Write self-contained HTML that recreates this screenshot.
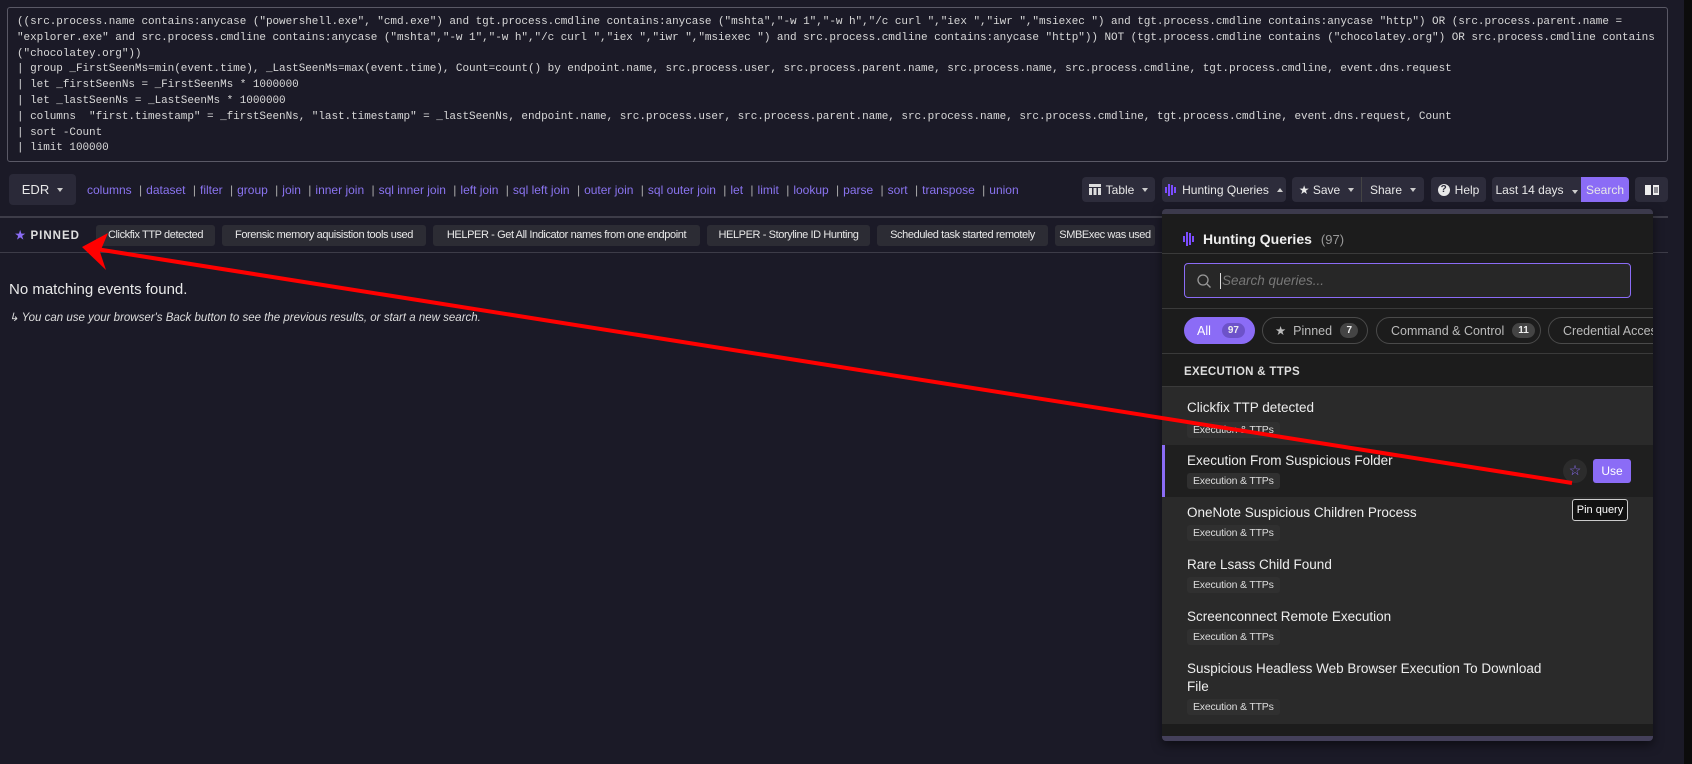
<!DOCTYPE html>
<html><head><meta charset="utf-8"><style>
*{box-sizing:border-box;margin:0;padding:0}
body{width:1692px;height:764px;background:#1b1a27;font-family:"Liberation Sans",sans-serif;color:#ddd;position:relative;overflow:hidden}
.abs{position:absolute}
.code{left:7px;top:7px;width:1661px;height:155px;border:1px solid #5a5966;border-radius:3px;font-family:"Liberation Mono",monospace;font-size:11px;letter-spacing:-0.05px;line-height:15.8px;color:#d8d8d8;padding:7px 9px;white-space:pre;overflow:hidden}
.btn{background:#2d2c3b;border-radius:4px;color:#e8e8e8;font-size:12px;display:flex;align-items:center;justify-content:center;height:25px;top:177px}
.car{display:inline-block;width:0;height:0;border-left:3.5px solid transparent;border-right:3.5px solid transparent;border-top:4px solid #ccc;margin-left:8px}
.caru{border-top:none;border-bottom:4px solid #ccc}
.links{left:87px;top:183px;font-size:12px;color:#8a74f0;white-space:nowrap}
.links i{font-style:normal;color:#aaa;margin:0 4px}
.hr{height:2px;background:#3d3c48}
.chip{top:225px;height:21px;background:#2c2c34;border-radius:3px;font-size:11px;color:#e8e8e8;line-height:21px;text-align:center;white-space:nowrap;letter-spacing:-0.4px;overflow:hidden}
.panel{left:1162px;top:209px;width:491px;height:532px;background:#1c1c1c;border-radius:4px;overflow:hidden;box-shadow:0 4px 10px rgba(0,0,0,.5)}
.item{position:absolute;left:0;width:491px;background:#2a2a2a}
.item .t{position:absolute;left:25px;font-size:13.5px;color:#eee;line-height:18px}
.item .g{position:absolute;left:25px;font-size:10.5px;color:#ddd;background:#303030;padding:2px 6px;border-radius:3px;letter-spacing:-0.2px}
.pill{position:absolute;top:108px;height:27px;border:1px solid #4a4a4a;border-radius:14px;font-size:12.5px;color:#bbb;display:flex;align-items:center;justify-content:space-between;padding:0 9px 0 14px;white-space:nowrap;overflow:hidden}
.cnt{background:#444;color:#eee;border-radius:9px;font-size:10px;font-weight:bold;padding:2px 6px;margin-left:8px}
</style></head><body>
<div class="abs code">((src.process.name contains:anycase ("powershell.exe", "cmd.exe") and tgt.process.cmdline contains:anycase ("mshta","-w 1","-w h","/c curl ","iex ","iwr ","msiexec ") and tgt.process.cmdline contains:anycase "http") OR (src.process.parent.name =
"explorer.exe" and src.process.cmdline contains:anycase ("mshta","-w 1","-w h","/c curl ","iex ","iwr ","msiexec ") and src.process.cmdline contains:anycase "http")) NOT (tgt.process.cmdline contains ("chocolatey.org") OR src.process.cmdline contains
("chocolatey.org"))
| group _FirstSeenMs=min(event.time), _LastSeenMs=max(event.time), Count=count() by endpoint.name, src.process.user, src.process.parent.name, src.process.name, src.process.cmdline, tgt.process.cmdline, event.dns.request
| let _firstSeenNs = _FirstSeenMs * 1000000
| let _lastSeenNs = _LastSeenMs * 1000000
| columns  "first.timestamp" = _firstSeenNs, "last.timestamp" = _lastSeenNs, endpoint.name, src.process.user, src.process.parent.name, src.process.name, src.process.cmdline, tgt.process.cmdline, event.dns.request, Count
| sort -Count
| limit 100000</div>

<div class="abs btn" style="left:9px;top:174px;width:67px;height:31px;font-size:13px;background:#2a2938">EDR<span class="car"></span></div>
<div class="abs links">columns <i>|</i>dataset <i>|</i>filter <i>|</i>group <i>|</i>join <i>|</i>inner join <i>|</i>sql inner join <i>|</i>left join <i>|</i>sql left join <i>|</i>outer join <i>|</i>sql outer join <i>|</i>let <i>|</i>limit <i>|</i>lookup <i>|</i>parse <i>|</i>sort <i>|</i>transpose <i>|</i>union</div>

<div class="abs btn" style="left:1082px;width:73px"><svg width="12" height="11" viewBox="0 0 12 11" style="margin-right:5px"><rect x="0" y="0" width="12" height="3" fill="#ddd"/><rect x="0" y="4" width="3" height="7" fill="#ddd"/><rect x="4.5" y="4" width="3" height="7" fill="#ddd"/><rect x="9" y="4" width="3" height="7" fill="#ddd"/></svg>Table<span class="car"></span></div>
<div class="abs btn" style="left:1162px;width:124px"><svg width="12" height="12" viewBox="0 0 12 12" style="margin-right:5px"><g fill="#7c4dff"><rect x="0" y="3" width="2" height="6"/><rect x="3" y="0" width="2" height="12"/><rect x="6" y="1" width="2" height="10"/><rect x="9" y="3" width="2" height="6"/></g></svg>Hunting Queries<span class="car caru"></span></div>
<div class="abs btn" style="left:1292px;width:132px;justify-content:flex-start"><span style="width:70px;display:flex;align-items:center;justify-content:center;border-right:1px solid #444;height:25px">★&nbsp;Save<span class="car"></span></span><span style="width:62px;display:flex;align-items:center;justify-content:center">Share<span class="car"></span></span></div>
<div class="abs btn" style="left:1431px;width:55px"><span style="display:inline-block;width:12px;height:12px;border-radius:50%;background:#e8e8e8;color:#2d2c3b;font-size:10px;font-weight:bold;text-align:center;line-height:12px;margin-right:5px">?</span>Help</div>
<div class="abs btn" style="left:1492px;width:137px;justify-content:flex-start;overflow:hidden"><span style="width:89px;text-align:center;white-space:nowrap">Last 14 days<span class="car"></span></span><span style="width:48px;height:25px;background:#8b6cf6;display:flex;align-items:center;justify-content:center">Search</span></div>
<div class="abs btn" style="left:1635px;width:33px"><svg width="16" height="12" viewBox="0 0 16 12"><path d="M1 1h6v10H1zM9 1h6v10H9z" fill="#eee"/><path d="M10 4h4M10 6h4M10 8h4" stroke="#2d2c3b" stroke-width="1"/></svg></div>

<div class="abs hr" style="left:0;top:216px;width:1668px"></div>
<div class="abs" style="left:15px;top:228px;font-size:11.5px;font-weight:bold;color:#e0e0e0;letter-spacing:1px"><span style="color:#8b6cf6">★</span> PINNED</div>
<div class="abs chip" style="left:96px;width:119px">Clickfix TTP detected</div>
<div class="abs chip" style="left:222px;width:204px">Forensic memory aquisistion tools used</div>
<div class="abs chip" style="left:433px;width:267px">HELPER - Get All Indicator names from one endpoint</div>
<div class="abs chip" style="left:707px;width:163px">HELPER - Storyline ID Hunting</div>
<div class="abs chip" style="left:877px;width:171px">Scheduled task started remotely</div>
<div class="abs chip" style="left:1055px;width:100px">SMBExec was used</div>
<div class="abs" style="left:0;top:252px;width:1668px;height:1px;background:#3d3c48"></div>

<div class="abs" style="left:9px;top:281px;font-size:15px;color:#e8e8e8">No matching events found.</div>
<div class="abs" style="left:9px;top:310px;font-size:11.5px;color:#ddd;font-style:italic">↳ You can use your browser's Back button to see the previous results, or start a new search.</div>

<div class="abs panel">
  <div style="position:absolute;left:0;top:0;width:491px;height:5px;background:#3c3a4c"></div>
  <div style="position:absolute;left:21px;top:22px;font-size:14px;font-weight:bold;color:#eee;display:flex;align-items:center"><svg width="11" height="14" viewBox="0 0 11 14" style="margin-right:9px"><g fill="#7c4dff"><rect x="0" y="4" width="2" height="6"/><rect x="3" y="0" width="2" height="14"/><rect x="6" y="1" width="2" height="12"/><rect x="9" y="4" width="2" height="6"/></g></svg>Hunting Queries<span style="font-weight:normal;color:#999;margin-left:9px;font-size:13px">(97)</span></div>
  <div style="position:absolute;left:0;top:44px;width:491px;height:1px;background:#3a3a3a"></div>
  <div style="position:absolute;left:22px;top:54px;width:447px;height:35px;border:1px solid #8b6cf6;border-radius:4px;background:#272727"><svg width="14" height="14" viewBox="0 0 14 14" style="position:absolute;left:12px;top:10px"><circle cx="6" cy="6" r="5" fill="none" stroke="#999" stroke-width="1.3"/><path d="M10 10l3.5 3.5" stroke="#999" stroke-width="1.3"/></svg><span style="position:absolute;left:35px;top:9px;width:1px;height:16px;background:#ddd"></span><span style="position:absolute;left:37px;top:9px;font-size:13.5px;color:#777;font-style:italic">Search queries...</span></div>
  <div style="position:absolute;left:0;top:99px;width:491px;height:1px;background:#3a3a3a"></div>
  <div class="pill" style="left:22px;width:71px;background:#8b6cf6;border-color:#8b6cf6;color:#fff;padding-left:12px">All<span class="cnt" style="background:#6d52c9">97</span></div>
  <div class="pill" style="left:100px;width:106px;padding-left:12px"><span>★&nbsp; Pinned</span><span class="cnt">7</span></div>
  <div class="pill" style="left:214px;width:165px"><span>Command &amp; Control</span><span class="cnt">11</span></div>
  <div class="pill" style="left:386px;width:140px;justify-content:flex-start">Credential Access</div>
  <div style="position:absolute;left:0;top:144px;width:491px;height:1px;background:#3a3a3a"></div>
  <div style="position:absolute;left:0;top:149px;width:491px;height:29px;background:#1c1c1c;border-bottom:1px solid #3a3a3a"><span style="position:absolute;left:22px;top:8px;font-size:11.5px;font-weight:bold;color:#ddd;letter-spacing:.3px">EXECUTION &amp; TTPS</span></div>
  <div class="item" style="top:178px;height:58px"><div class="t" style="top:12px">Clickfix TTP detected</div><div class="g" style="top:35px">Execution &amp; TTPs</div></div>
  <div class="item" style="top:236px;height:52px;background:#1f1f1f"><div style="position:absolute;left:0;top:0;width:3px;height:52px;background:#8b6cf6"></div><div class="t" style="top:7px">Execution From Suspicious Folder</div><div class="g" style="top:28px">Execution &amp; TTPs</div>
    <div style="position:absolute;left:401px;top:14px;width:24px;height:24px;border-radius:50%;background:#2c2c2c;color:#8b6cf6;text-align:center;line-height:23px;font-size:14px">☆</div>
    <div style="position:absolute;left:431px;top:14px;width:38px;height:24px;border-radius:3px;background:#8b6cf6;color:#fff;font-size:12px;text-align:center;line-height:24px">Use</div></div>
  <div class="item" style="top:288px;height:52px"><div class="t" style="top:7px">OneNote Suspicious Children Process</div><div class="g" style="top:28px">Execution &amp; TTPs</div></div>
  <div class="item" style="top:340px;height:52px"><div class="t" style="top:7px">Rare Lsass Child Found</div><div class="g" style="top:28px">Execution &amp; TTPs</div></div>
  <div class="item" style="top:392px;height:52px"><div class="t" style="top:7px">Screenconnect Remote Execution</div><div class="g" style="top:28px">Execution &amp; TTPs</div></div>
  <div class="item" style="top:444px;height:71px"><div class="t" style="top:7px;width:370px">Suspicious Headless Web Browser Execution To Download File</div><div class="g" style="top:46px">Execution &amp; TTPs</div></div>
  <div style="position:absolute;left:0;top:527px;width:491px;height:5px;background:#44405a"></div>
</div>
<div class="abs" style="left:1572px;top:499px;width:56px;height:22px;background:#111;border:1px solid #ccc;border-radius:3px;color:#fff;font-size:11px;text-align:center;line-height:20px">Pin query</div>

<svg class="abs" style="left:0;top:0" width="1692" height="764"><line x1="1572" y1="483" x2="96" y2="249" stroke="#ff0000" stroke-width="4"/><polygon points="82,247 108,233 100,252 106,270" fill="#ff0000"/></svg>
<div class="abs" style="left:1684px;top:0;width:8px;height:764px;background:#0c0c0c"></div>
</body></html>
